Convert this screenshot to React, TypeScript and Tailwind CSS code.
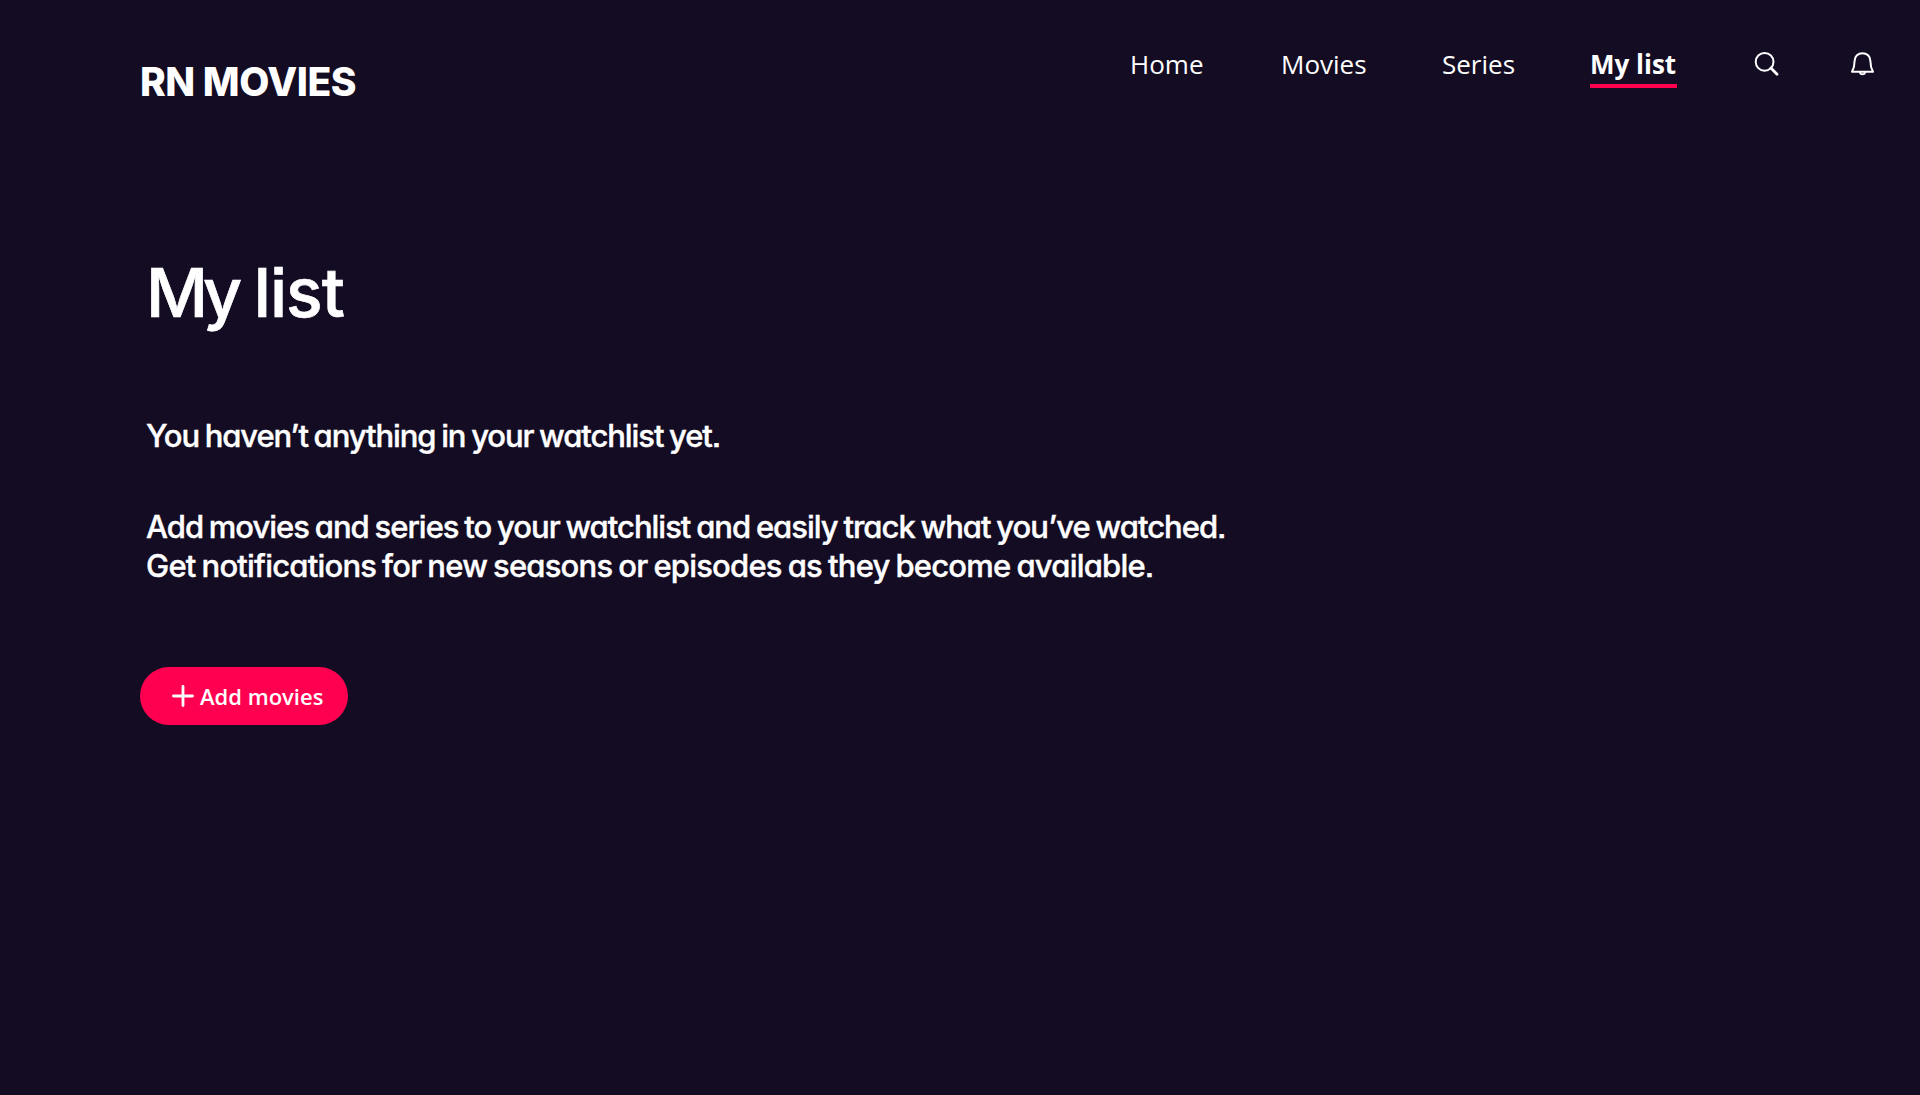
const navItems = [
  { label: 'Home', slot: 'w-[151px]' },
  { label: 'Movies', slot: 'w-[161px]' },
  { label: 'Series', slot: 'w-[148px]' },
];

function SearchIcon() {
  return (
    <svg width="25" height="25" viewBox="0 0 25 25" fill="none" stroke="currentColor">
      <circle cx="10.6" cy="10.8" r="8.9" strokeWidth="2" />
      <path d="M16.9 17.1 L23 23.2" strokeWidth="2.8" strokeLinecap="round" />
    </svg>
  );
}

function BellIcon() {
  return (
    <svg width="25" height="25" viewBox="0 0 25 25" fill="none" stroke="currentColor" strokeWidth="2" strokeLinejoin="round" strokeLinecap="round">
      <path d="M2 20.8 C4 17.2 4.6 14 4.6 10 C4.6 5.2 8.2 2.2 12.5 2.2 C16.8 2.2 20.4 5.2 20.4 10 C20.4 14 21 17.2 23 20.8 Z" />
      <path d="M10 21.2 C10.2 24 14.8 24 15 21.2" />
    </svg>
  );
}

function Header() {
  return (
    <header className="flex h-[110px] items-start justify-between pl-[140px] pr-[45px]">
      <div className="pt-[59px] font-['Inter'] text-[39px] leading-[46px] font-extrabold tracking-[-0.45px] whitespace-nowrap">
        RN MOVIES
      </div>
      <nav className="flex items-start pt-[46px] font-['Open_Sans'] text-[26px] leading-[36px] whitespace-nowrap">
        {navItems.map((item) => (
          <a key={item.label} href="#" className={item.slot}>
            {item.label}
          </a>
        ))}
        <a href="#" className="w-[87px] border-b-4 border-[#ff0050] pb-[2px] font-bold">
          My list
        </a>
        <button className="mt-[5px] ml-[77px]" aria-label="Search">
          <SearchIcon />
        </button>
        <button className="mt-[5px] ml-[71px]" aria-label="Notifications">
          <BellIcon />
        </button>
      </nav>
    </header>
  );
}

export default function App() {
  return (
    <div className="min-h-[1095px] w-full bg-[#140c23] text-white">
      <Header />
      <main className="flex flex-col items-start pl-[146px] font-['Inter'] font-medium [font-feature-settings:'cv11','ss07'] whitespace-nowrap">
        <h1 className="mt-[140px] text-[68px] leading-[84px] tracking-[-1px] [-webkit-text-stroke:0.7px_white]">
          <span className="tracking-[-5.5px]">My</span> list
        </h1>
        <div className="mt-[82px] text-[31px] leading-[39px] [word-spacing:-1.5px] [-webkit-text-stroke:0.4px_white]">
          <p className="mb-[52px] tracking-[-1.08px]">You haven’t anything in your watchlist yet.</p>
          <p className="tracking-[-1px]">Add movies and series to your watchlist and easily track what you’ve watched.</p>
          <p className="tracking-[-0.79px]">Get notifications for new seasons or episodes as they become available.</p>
        </div>
        <button className="mt-[82px] -ml-[6px] flex h-[58px] w-[208px] items-center rounded-full bg-[#ff0050] pl-[32px] font-['Open_Sans'] text-[22px] font-semibold">
          <svg width="22" height="22" viewBox="0 0 22 22" stroke="currentColor" strokeWidth="2.8" strokeLinecap="round">
            <path d="M11 1.5 V20.5 M1.5 11 H20.5" />
          </svg>
          <span className="ml-[6px]">Add movies</span>
        </button>
      </main>
    </div>
  );
}
